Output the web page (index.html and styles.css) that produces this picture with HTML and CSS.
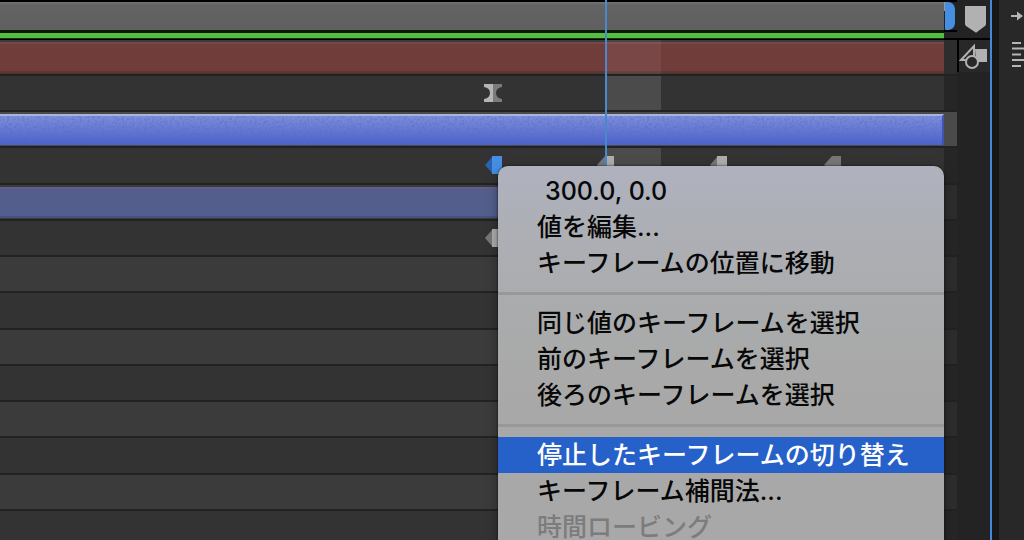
FILE: index.html
```html
<!DOCTYPE html>
<html lang="ja">
<head>
<meta charset="utf-8">
<title>タイムライン</title>
<link rel="stylesheet" href="styles.css">
</head>
<body>
<svg class="defs" aria-hidden="true">
  <defs>
    <symbol id="key-hold" viewBox="0 0 17 18"><path class="shade" d="M0 9 7 1v16z"/><path class="face" d="M7 0h10v18H7z"/></symbol>
    <symbol id="key-wide" viewBox="0 0 17 18"><path class="shade" d="M0 9 8 0v18z"/><path class="face" d="M8 0h9v18H8z"/></symbol>
  </defs>
</svg>
<div class="app">
  <main class="timeline">
    <div class="header">
      <div class="work-area"><span class="notch"></span><span class="handle"></span></div>
      <div class="cache"></div>
    </div>
    <div class="tracks">
      <div class="row layer"><div class="lane"><div class="bar red"></div></div></div>
      <div class="row"><div class="lane">
        <svg class="key glass" viewBox="0 0 18 18"><path fill="#b5b5b5" d="M0 0h9v18H0v-3q6-1 6-6T0 3z"/><path fill="#7b7b7b" d="M9 0h9v3q-6 1-6 6t6 6v3H9z"/></svg>
      </div></div>
      <div class="row selected"><div class="lane"><div class="bar blue">
        <svg class="grain" aria-hidden="true"><filter id="grain" x="0" y="0" width="100%" height="100%"><feTurbulence type="fractalNoise" baseFrequency="0.4" numOctaves="2" seed="4"/><feColorMatrix values="0 0 0 0 0.1  0 0 0 0 0.15  0 0 0 0 0.55  2.4 0 0 0 -1"/></filter><rect width="100%" height="100%" filter="url(#grain)"/></svg>
      </div></div></div>
      <div class="row"><div class="lane">
        <svg class="key k1 active"><use href="#key-hold"/></svg>
        <svg class="key k2"><use href="#key-wide"/></svg>
        <svg class="key k3"><use href="#key-hold"/></svg>
        <svg class="key k4 dim"><use href="#key-wide"/></svg>
      </div></div>
      <div class="row layer"><div class="lane"><div class="bar slate"></div></div></div>
      <div class="row"><div class="lane"><svg class="key k1"><use href="#key-hold"/></svg></div></div>
      <div class="row layer"><div class="lane"></div></div>
      <div class="row"><div class="lane"></div></div>
      <div class="row layer"><div class="lane"></div></div>
      <div class="row"><div class="lane"></div></div>
      <div class="row layer"><div class="lane"></div></div>
      <div class="row"><div class="lane"></div></div>
      <div class="row layer"><div class="lane"></div></div>
      <div class="row"><div class="lane"></div></div>
    </div>
    <div class="playhead"></div>
  </main>
  <aside class="gutter">
    <button class="tool marker" aria-label="マーカー"><svg viewBox="0 0 32 38"><path fill="#b1b1b1" d="M8 6h21v18q0 1-1 2l-8 6q-1 1-2 0l-9-6q-1-1-1-2z"/></svg></button>
    <button class="tool shapes" aria-label="シェイプ"><svg viewBox="0 0 32 32"><path fill="#b1b1b1" d="M16 9h12v13H17z"/><path fill="#282828" stroke="#b1b1b1" stroke-width="2" d="M2 20 15 6v14z"/><circle cx="13" cy="22" r="6" fill="#282828" stroke="#b1b1b1" stroke-width="2"/></svg></button>
  </aside>
  <aside class="dock">
    <svg class="dock-icons" viewBox="0 0 25 72"><path fill="none" stroke="#b5b5b5" stroke-width="2" d="M12 16h9M13 43h9M13 48.500h12M13 54.500h9M13 60h12M13 66h9"/><path fill="#b5b5b5" d="M18 11.500 24 16l-6 4.500z"/></svg>
  </aside>
</div>
<div class="menu" role="menu">
  <button class="item value" role="menuitem">300.0, 0.0</button>
  <button class="item" role="menuitem">値を編集...</button>
  <button class="item" role="menuitem">キーフレームの位置に移動</button>
  <hr class="separator">
  <button class="item" role="menuitem">同じ値のキーフレームを選択</button>
  <button class="item" role="menuitem">前のキーフレームを選択</button>
  <button class="item" role="menuitem">後ろのキーフレームを選択</button>
  <hr class="separator">
  <button class="item current" role="menuitem">停止したキーフレームの切り替え</button>
  <button class="item" role="menuitem">キーフレーム補間法...</button>
  <button class="item" role="menuitem" disabled>時間ロービング</button>
</div>
</body>
</html>
```
FILE: styles.css
```css
* { box-sizing: border-box; }
body {
  margin: 0;
  height: 100vh;
  overflow: hidden;
  background: #242424;
  font-family: Inter, "Noto Sans CJK JP", sans-serif;
}
button { border: 0; padding: 0; background: none; font: inherit; color: inherit; }
.defs { position: absolute; width: 0; height: 0; }
.app { display: flex; height: 100%; overflow: hidden; position: relative; }

/* timeline */
.timeline { flex: 1; min-width: 0; position: relative; }
.header { height: 40px; padding-top: 2px; background: linear-gradient(#000 2px, #232323 2px, #232323 30px, #000 30px, #000 32px, #232323 32px, #232323 38px, #000 38px); }
.work-area {
  position: relative;
  height: 28px;
  margin-right: 13px;
  background: linear-gradient(#747474, #636363 3px, #5f5f5f);
}
.notch { position: absolute; right: -2px; top: 0; width: 2px; height: 9px; background: #999; }
.handle { position: absolute; right: -11px; top: 0; width: 10px; height: 28px; border-radius: 1px 7px 7px 1px; background: #458ee2; }
.cache { height: 9px; margin-right: 13px; background: #57bd40; border-top: 3px solid #071a07; border-bottom: 1px solid #123410; }
.row {
  height: 36px;
  padding-right: 13px;
  border-bottom: 2px solid #222;
  background: #262626;
}
.row:nth-child(4n) { height: 37px; }
.row.layer { background: #2d2d2d; }
.row.selected { background: #4a4a4a; }
.lane {
  position: relative;
  height: 100%;
  padding-top: 2px;
  background: #333;
}
.layer .lane { background: #3b3b3b; }
.selected .lane { background: #4a4a4a; }
.lane::after {
  content: "";
  position: absolute;
  top: 0;
  bottom: 0;
  left: 606px;
  width: 55px;
  background: rgba(255, 255, 255, .12);
}
.layer .lane::after { background: rgba(255, 255, 255, .06); }
.selected .lane::after { display: none; }
.bar { height: 31px; }
.red { background: #713d3b; border-top: 2px solid #794745; border-bottom: 2px solid #653230; }
.blue { position: relative; background: linear-gradient(#7f8fda, #4a60ca); border-top: 2px solid #aab2df; border-right: 2px solid #4054b2; }
.grain { position: absolute; inset: 0; width: 100%; height: 100%; opacity: .6; }
.slate { background: #535e8d; border-top: 2px solid #615f87; border-bottom: 2px solid #47517d; }
.playhead { position: absolute; left: 605px; top: 0; width: 2px; height: 174px; background: #4b87cb; }

/* keyframes */
.key { position: absolute; top: 8px; width: 17px; height: 18px; z-index: 1; }
.glass { left: 484px; width: 18px; }
.k1 { left: 485px; }
.k2 { left: 597px; }
.k3 { left: 710px; }
.k4 { left: 824px; }
.face { fill: var(--face, #adadad); }
.shade { fill: var(--shade, #777); }
.active { --face: #458ee2; --shade: #2962ae; }
.dim { --face: #777; --shade: #777; }
.playhead { z-index: 2; }

/* side columns */
.gutter { width: 35px; border-right: 2px solid #4587dc; background: #232323; }
.tool { display: block; width: 100%; }
.tool svg { display: block; width: 32px; }
.marker { height: 40px; border-bottom: 2px solid #000; }
.shapes { height: 32px; background: #282828; border-left: 2px solid #000; }
.dock { width: 32px; border-left: 7px solid #171717; background: #282828; }
.dock-icons { display: block; width: 25px; height: 72px; }

/* context menu */
.menu {
  position: absolute;
  z-index: 3;
  top: 166px;
  left: 498px;
  width: 446px;
  padding: 7px 0 12px;
  border-radius: 10px;
  overflow: hidden;
  color: #080808;
  background: linear-gradient(#afb1be, #adafb5 70px, #aaabac 140px, #a8a8a8 250px);
  box-shadow: 0 0 2px #111, 0 4px 12px rgba(0, 0, 0, .35);
}
.item {
  display: block;
  width: 100%;
  height: 36px;
  padding-left: 39px;
  font-size: 25px;
  font-weight: 500;
  line-height: 36px;
  text-align: left;
  white-space: nowrap;
}
.value { padding-left: 47px; }
.current { background: #2660c9; color: #fff; }
.item:disabled { color: #7c7c7c; }
.separator { height: 3px; margin: 11px 0 10px; border: 0; background: #989898; }
```
